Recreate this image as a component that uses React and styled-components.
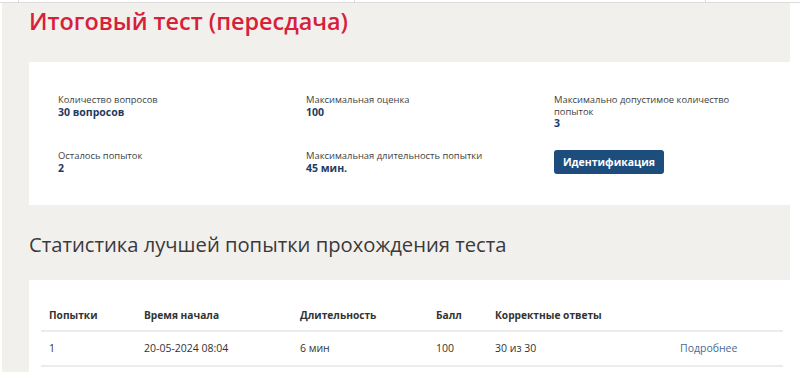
import styled, { createGlobalStyle } from 'styled-components';

const GlobalStyle = createGlobalStyle`
  html, body {
    margin: 0;
    padding: 0;
    background: #ffffff;
  }
  body {
    font-family: "Open Sans", "Noto Sans", "DejaVu Sans", sans-serif;
    color: #333333;
  }
`;

const TopStrip = styled.div`
  display: flex;
  height: 2px;
  border-bottom: 1px solid #dcdcdc;
`;

const StripCell = styled.div`
  width: ${(p) => p.$w}px;
  border-right: 1px solid #dcdcdc;
`;

const Page = styled.main`
  margin-left: 2px;
  width: 761px;
  height: 366px;
  padding: 3px 0 0 27px;
  box-sizing: content-box;
  background: #f2f0ed;
  overflow: hidden;
`;

const Title = styled.h1`
  margin: 0;
  font-size: 23.4px;
  line-height: 30px;
  font-weight: 600;
  color: #d7203a;
`;

const Card = styled.section`
  background: #ffffff;
  margin-top: 26px;
`;

const InfoGrid = styled.div`
  display: grid;
  grid-template-columns: repeat(3, 190px);
  column-gap: 58px;
  row-gap: 20px;
  padding: 32px 29px 30px;
`;

const Field = styled.div`
  display: flex;
  flex-direction: column;
`;

const Label = styled.span`
  font-size: 9.4px;
  line-height: 11.5px;
  color: #3f3f3f;
`;

const Value = styled.b`
  font-size: 10.5px;
  line-height: 13px;
  font-weight: 700;
  color: #1f3a64;
`;

const Button = styled.button`
  display: block;
  width: 110px;
  height: 24px;
  padding: 0;
  border: none;
  border-radius: 3px;
  background: #1c4d7c;
  color: #ffffff;
  font-family: inherit;
  font-size: 10.5px;
  font-weight: 700;
  cursor: pointer;
`;

const Heading = styled.h2`
  margin: 25px 0 0;
  font-size: 20.2px;
  line-height: 28px;
  font-weight: 400;
  color: #3a3a3a;
`;

const TableCard = styled(Card)`
  margin-top: 22px;
  padding: 24px 7px 20px 12px;
`;

const Table = styled.table`
  width: 742px;
  border-collapse: collapse;
  table-layout: fixed;
  font-size: 10.5px;
  line-height: 14px;
`;

const Th = styled.th`
  box-sizing: border-box;
  width: ${(p) => p.$w}px;
  padding: 4px 8px 8px;
  text-align: left;
  font-size: 10.2px;
  font-weight: 700;
  color: #333333;
  border-bottom: 2px solid #ececec;
`;

const Td = styled.td`
  padding: 9px 8px 10px;
  color: #333333;
  white-space: nowrap;
  border-bottom: 2px solid #ececec;
`;

const MoreLink = styled.a`
  color: #4a6a96;
  text-decoration: none;
  cursor: pointer;
`;

const fields = [
  { label: 'Количество вопросов', value: '30 вопросов' },
  { label: 'Максимальная оценка', value: '100' },
  { label: 'Максимально допустимое количество попыток', value: '3' },
  { label: 'Осталось попыток', value: '2' },
  { label: 'Максимальная длительность попытки', value: '45 мин.' },
];

const columns = [
  { title: 'Попытки', w: 95 },
  { title: 'Время начала', w: 156 },
  { title: 'Длительность', w: 136 },
  { title: 'Балл', w: 59 },
  { title: 'Корректные ответы', w: 185 },
  { title: '', w: 111 },
];

export default function App() {
  return (
    <>
      <GlobalStyle />
      <TopStrip>
        <StripCell $w={18} />
        <StripCell $w={335} />
        <StripCell $w={350} />
      </TopStrip>
      <Page>
        <Title>Итоговый тест (пересдача)</Title>
        <Card>
          <InfoGrid>
            {fields.map((f) => (
              <Field key={f.label}>
                <Label>{f.label}</Label>
                <Value>{f.value}</Value>
              </Field>
            ))}
            <div>
              <Button>Идентификация</Button>
            </div>
          </InfoGrid>
        </Card>
        <Heading>Статистика лучшей попытки прохождения теста</Heading>
        <TableCard>
          <Table>
            <thead>
              <tr>
                {columns.map((c) => (
                  <Th key={c.w} $w={c.w}>{c.title}</Th>
                ))}
              </tr>
            </thead>
            <tbody>
              <tr>
                <Td>1</Td>
                <Td>20-05-2024 08:04</Td>
                <Td>6 мин</Td>
                <Td>100</Td>
                <Td>30 из 30</Td>
                <Td>
                  <MoreLink>Подробнее</MoreLink>
                </Td>
              </tr>
            </tbody>
          </Table>
        </TableCard>
      </Page>
    </>
  );
}
